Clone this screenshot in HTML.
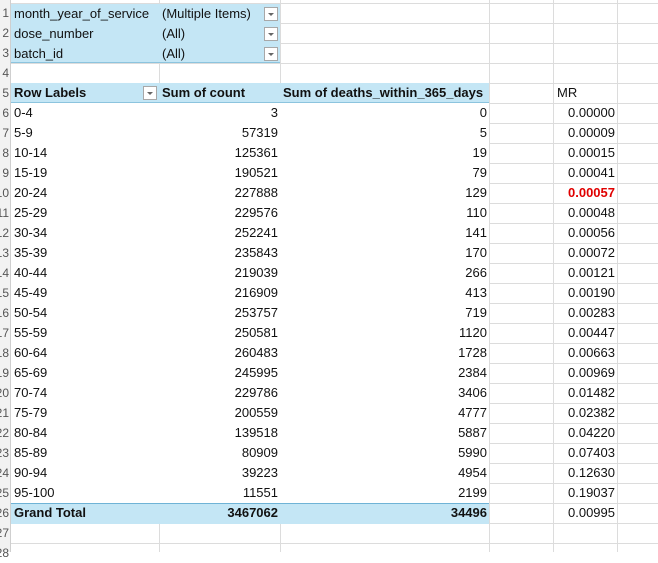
<!DOCTYPE html>
<html><head><meta charset="utf-8"><style>
body{margin:0;width:658px;height:552px;overflow:hidden;background:#fff;font-family:"Liberation Sans",Arial,sans-serif;font-size:13px;color:#111;}
.c{position:absolute;box-sizing:border-box;height:20px;line-height:20px;white-space:nowrap;overflow:hidden}
.v{position:absolute;width:1px;background:#dcdcdc}
.h{position:absolute;height:1px;background:#dcdcdc}
.blue{position:absolute;background:#c4e6f5}
.r{text-align:right}
.btn{position:absolute;width:14px;height:14px;border:1px solid #a8a8a8;background:#fff;box-sizing:border-box}
.btn:after{content:"";position:absolute;left:3px;top:5px;border-left:3px solid transparent;border-right:3px solid transparent;border-top:3px solid #666}
.rh{position:absolute;left:0;width:11px;background:#f2f2f2;border-right:1px solid #cfcfcf;box-sizing:border-box;top:0;height:552px}
</style></head><body>
<div class="rh"></div>
<div id="g"></div>
<script>
var g=document.getElementById('g'),h='';
// grid lines
var cols=[159,280,489,553,617];
for(var i=0;i<cols.length;i++)h+='<div class="v" style="left:'+cols[i]+'px;top:0;height:552px"></div>';
for(var y=3;y<552;y+=20)h+='<div class="h" style="left:11px;top:'+y+'px;width:647px"></div>';
// blue areas (cover grid)
h+='<div class="blue" style="left:11px;top:4px;width:269px;height:58px;border-bottom:1px solid #8cc4de"></div>';
h+='<div style="position:absolute;left:11px;top:84px;width:478px;height:18px;background:#fff"></div>';
h+='<div class="blue" style="left:11px;top:83px;width:478px;height:19px;border-bottom:1px solid #8cc4de"></div>';
h+='<div style="position:absolute;left:11px;top:103px;width:478px;height:400px;background:#fff"></div>';
h+='<div class="blue" style="left:11px;top:503px;width:478px;height:20px;border-top:1px solid #6fb3d6"></div>';
// row numbers
for(var r=1;r<=28;r++){h+='<div class="c r" style="left:-6px;width:15px;top:'+(3+(r-1)*20)+'px;color:#555;font-size:12px">'+r+'</div>';}
var f=[['month_year_of_service','(Multiple Items)'],['dose_number','(All)'],['batch_id','(All)']];
for(var i=0;i<3;i++){var t=4+i*20;h+='<div class="c" style="left:14px;top:'+t+'px">'+f[i][0]+'</div><div class="c" style="left:162px;top:'+t+'px">'+f[i][1]+'</div><div class="btn" style="left:264px;top:'+(t+3)+'px"></div>';}
h+='<div class="c" style="left:14px;top:83px;font-weight:bold">Row Labels</div><div class="btn" style="left:143px;top:86px"></div>';
h+='<div class="c" style="left:162px;top:83px;font-weight:bold">Sum of count</div>';
h+='<div class="c" style="left:283px;top:83px;font-weight:bold">Sum of deaths_within_365_days</div>';
h+='<div class="c" style="left:557px;top:83px">MR</div>';
var d=[['0-4',3,0,'0.00000'],['5-9',57319,5,'0.00009'],['10-14',125361,19,'0.00015'],['15-19',190521,79,'0.00041'],['20-24',227888,129,'0.00057'],['25-29',229576,110,'0.00048'],['30-34',252241,141,'0.00056'],['35-39',235843,170,'0.00072'],['40-44',219039,266,'0.00121'],['45-49',216909,413,'0.00190'],['50-54',253757,719,'0.00283'],['55-59',250581,1120,'0.00447'],['60-64',260483,1728,'0.00663'],['65-69',245995,2384,'0.00969'],['70-74',229786,3406,'0.01482'],['75-79',200559,4777,'0.02382'],['80-84',139518,5887,'0.04220'],['85-89',80909,5990,'0.07403'],['90-94',39223,4954,'0.12630'],['95-100',11551,2199,'0.19037'],['Grand Total',3467062,34496,'0.00995']];
for(var i=0;i<d.length;i++){var t=103+i*20,b=i==20?'font-weight:bold;':'';
h+='<div class="c" style="left:14px;top:'+t+'px;'+b+'">'+d[i][0]+'</div>';
h+='<div class="c r" style="left:159px;width:119px;top:'+t+'px;'+b+'">'+d[i][1]+'</div>';
h+='<div class="c r" style="left:280px;width:207px;top:'+t+'px;'+b+'">'+d[i][2]+'</div>';
h+='<div class="c r" style="left:553px;width:62px;top:'+t+'px;'+(i==4?'color:#e00000;font-weight:bold':'')+'">'+d[i][3]+'</div>';}
g.innerHTML=h;
</script>
</body></html>
